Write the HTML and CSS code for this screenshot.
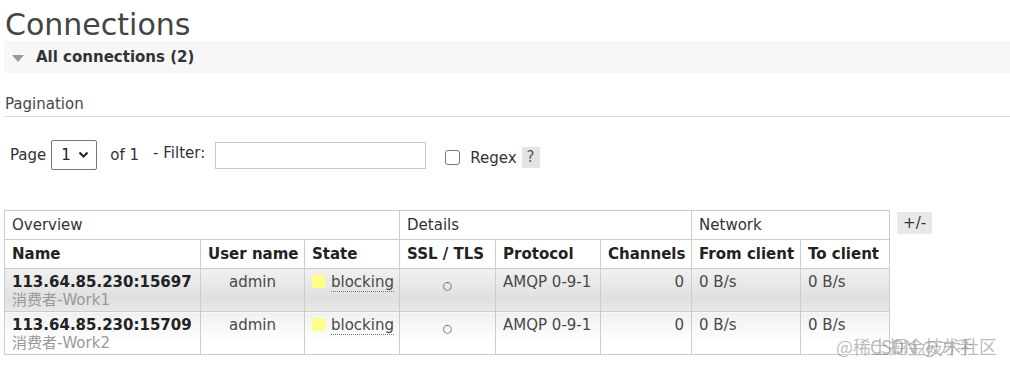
FILE: index.html
```html
<!DOCTYPE html>
<html lang="en">

<head>
    <meta charset="UTF-8">
    <meta name="viewport" content="width=device-width, initial-scale=1.0">
    <title>Connections</title>
    <link rel="stylesheet" href="styles.css">
</head>

<body>
    <div class="main">
        <h1>Connections</h1>
        <div class="section-title">
            <span class="toggle"></span>
            <h2>All connections (2)</h2>
        </div>

        <h3 class="pagination-title">Pagination</h3>
        <div class="pagination">
            <span>Page</span>
            <div class="page-select">
                <span>1</span>
                <svg width="11" height="8" viewBox="0 0 11 8">
                    <path d="M1.5 1.5 L5.5 5.5 L9.5 1.5" fill="none" stroke="#222" stroke-width="2" />
                </svg>
            </div>
            <span class="of">of 1</span>
            <span class="filter-label">- Filter:</span>
            <input type="text" class="filter-input">
            <input type="checkbox" class="regex-check">
            <span class="regex-label">Regex</span>
            <span class="help">?</span>
        </div>

        <div class="list-wrap">
            <table class="list">
                <colgroup>
                    <col style="width: 196px">
                    <col style="width: 104px">
                    <col style="width: 95px">
                    <col style="width: 96px">
                    <col style="width: 105px">
                    <col style="width: 91px">
                    <col style="width: 109px">
                    <col style="width: 89px">
                </colgroup>
                <thead>
                    <tr class="group">
                        <th colspan="3">Overview</th>
                        <th colspan="3">Details</th>
                        <th colspan="2">Network</th>
                    </tr>
                    <tr class="cols">
                        <th>Name</th>
                        <th>User name</th>
                        <th>State</th>
                        <th>SSL / TLS</th>
                        <th>Protocol</th>
                        <th>Channels</th>
                        <th>From client</th>
                        <th>To client</th>
                    </tr>
                </thead>
                <tbody>
                    <tr class="alt1">
                        <td><b>113.64.85.230:15697</b><br><span class="conn-name">消费者-Work1</span></td>
                        <td class="c">admin</td>
                        <td><span class="state-box"></span><span class="state">blocking</span></td>
                        <td class="c"><span class="ring">○</span></td>
                        <td>AMQP 0-9-1</td>
                        <td class="r">0</td>
                        <td>0 B/s</td>
                        <td>0 B/s</td>
                    </tr>
                    <tr class="alt2">
                        <td><b>113.64.85.230:15709</b><br><span class="conn-name">消费者-Work2</span></td>
                        <td class="c">admin</td>
                        <td><span class="state-box"></span><span class="state">blocking</span></td>
                        <td class="c"><span class="ring">○</span></td>
                        <td>AMQP 0-9-1</td>
                        <td class="r">0</td>
                        <td>0 B/s</td>
                        <td>0 B/s</td>
                    </tr>
                </tbody>
            </table>
            <span class="columns-btn">+/-</span>
        </div>
    </div>

    <div class="watermark">
        <span class="wm-a">@稀土掘金技术社区</span>
        <span class="wm-b">CSDN @方手</span>
    </div>
</body>

</html>
```

FILE: styles.css
```css
body {
    margin: 0;
    padding: 0;
    font-family: "DejaVu Sans", Verdana, "Noto Sans CJK SC", sans-serif;
    font-size: 15px;
    color: #484848;
    background: #fff;
    position: relative;
    min-height: 369px;
    overflow: hidden;
}

.main {
    padding-left: 4px;
}

h1 {
    margin: 9px 0 0 1px;
    font-size: 30px;
    font-weight: normal;
    line-height: 32px;
    color: #444;
}

.section-title {
    display: flex;
    align-items: center;
    height: 32px;
    background: #f7f7f7;
}

.toggle {
    width: 0;
    height: 0;
    margin: 2px 12px 0 8px;
    border-left: 6px solid transparent;
    border-right: 6px solid transparent;
    border-top: 7px solid #999;
}

.section-title h2 {
    margin: 0;
    font-size: 15px;
    font-weight: bold;
    color: #333;
}

.pagination-title {
    margin: 22px 0 0 0;
    padding: 0 0 3px 1px;
    font-size: 15px;
    font-weight: normal;
    line-height: 18px;
    color: #484848;
    border-bottom: 1px solid #ddd;
}

.pagination {
    display: flex;
    align-items: center;
    height: 30px;
    margin-top: 23px;
    padding-left: 6px;
    color: #333;
}

.page-select {
    display: flex;
    align-items: center;
    justify-content: space-between;
    box-sizing: border-box;
    width: 46px;
    height: 30px;
    margin-left: 5px;
    padding: 0 7px 0 9px;
    border: 1px solid #767676;
    border-radius: 2px;
    color: #222;
}

.of {
    margin-left: 13px;
}

.filter-label {
    margin-left: 14px;
    margin-top: -4px;
}

.filter-input {
    box-sizing: border-box;
    width: 211px;
    height: 27px;
    margin: 0 0 0 10px;
    border: 1px solid #c8c8c8;
    padding: 2px;
}

.regex-check {
    appearance: none;
    box-sizing: border-box;
    width: 15px;
    height: 15px;
    margin: 4px 0 0 19px;
    border: 1px solid #767676;
    border-radius: 3px;
    background: #fff;
}

.regex-label {
    margin: 6px 0 0 10px;
}

.help {
    margin: 4px 0 0 5px;
    padding: 0 5px;
    line-height: 21px;
    background: #e4e4e4;
    color: #555;
}

.list-wrap {
    display: flex;
    align-items: flex-start;
    margin-top: 40px;
}

.list {
    border-collapse: collapse;
    table-layout: fixed;
    width: 885px;
}

.list th,
.list td {
    border: 1px solid #ccc;
    padding: 0 7px;
    text-align: left;
    white-space: nowrap;
    overflow: hidden;
}

.list tr.group th {
    height: 28px;
    font-weight: normal;
    color: #333;
}

.list tr.cols th {
    height: 28px;
    font-weight: bold;
    color: #222;
}

.list td {
    padding-top: 4px;
    padding-bottom: 2px;
    vertical-align: top;
    line-height: 18px;
}

.list td b {
    color: #222;
}

.list td.c {
    text-align: center;
}

.list td.r {
    text-align: right;
}

.list tr.alt1 td {
    background: linear-gradient(to bottom, #f0f0f0 0%, #e0e0e0 70%, #e8e8e8 100%);
}

.list tr.alt2 td {
    background: linear-gradient(to bottom, #f0f0f0 0%, #fff 70%);
}

.conn-name {
    color: #999;
}

.state-box {
    display: inline-block;
    width: 13px;
    height: 13px;
    margin-right: 6px;
    vertical-align: -1px;
    background: #ffff88;
}

.state {
    border-bottom: 1px dotted #777;
}

.ring {
    font-size: 11px;
    color: #555;
    position: relative;
    top: 2px;
}

.columns-btn {
    margin: 2px 0 0 7px;
    padding: 0 6px;
    line-height: 22px;
    background: #e8e8e8;
    color: #333;
}

.watermark {
    position: absolute;
    left: 836px;
    top: 333px;
    width: 170px;
    height: 24px;
    font-family: "Noto Sans CJK SC", sans-serif;
    font-size: 18px;
    color: rgba(130, 130, 130, 0.55);
}

.wm-a,
.wm-b {
    position: absolute;
    top: 0;
    white-space: nowrap;
}

.wm-a {
    left: 0;
}

.wm-b {
    left: 34px;
}
```
